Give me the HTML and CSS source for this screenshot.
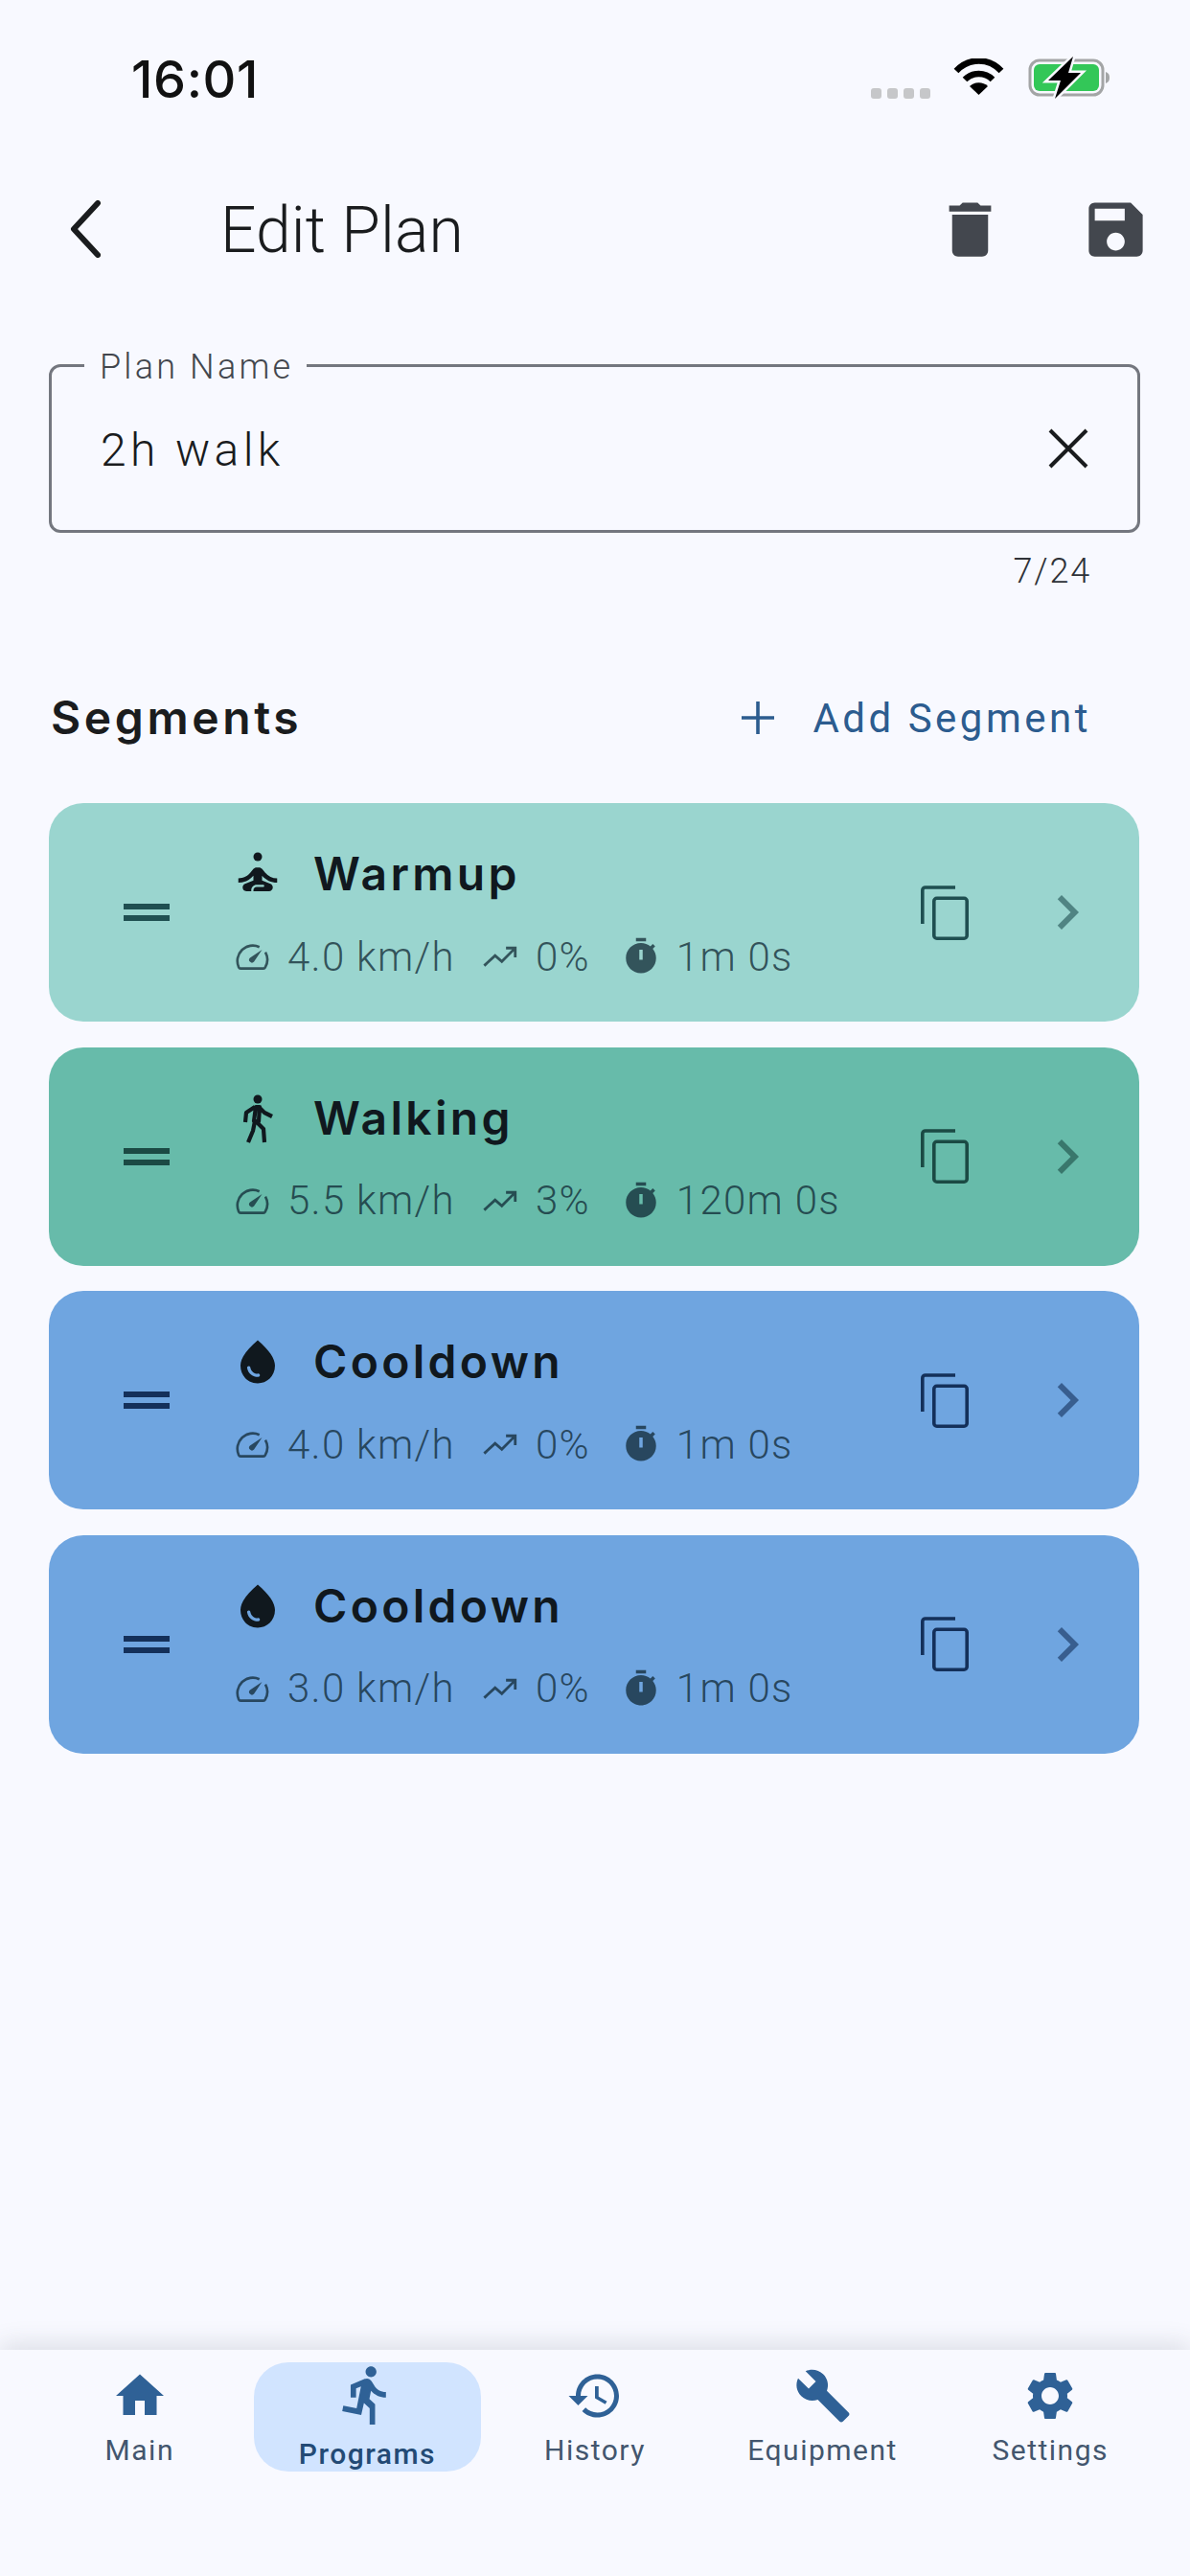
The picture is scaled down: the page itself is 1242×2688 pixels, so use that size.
FILE: index.html
```html
<!DOCTYPE html>
<html lang="en">
<head>
<meta charset="utf-8">
<title>Edit Plan</title>
<link rel="stylesheet" href="styles.css">
</head>
<body>
<svg class="defs" width="0" height="0" aria-hidden="true">
  <symbol id="i-drag" viewBox="0 0 24 24"><path d="M20 9H4v2h16V9zM4 15h16v-2H4v2z"/></symbol>
  <symbol id="i-speed" viewBox="0 0 24 24"><path d="M16.400 6.400A9.200 9.200 0 0 0 4.100 18.500a1.300 1.300 0 0 0 1.100.7H18.800a1.300 1.300 0 0 0 1.100-.7 9.200 9.200 0 0 0 .1-9" fill="none" stroke="currentColor" stroke-width="1.500"/><path d="M10.800 15.200a1.700 1.700 0 0 0 2.400 0l4.800-7.200-7.200 4.800a1.700 1.700 0 0 0 0 2.400z"/></symbol>
  <symbol id="i-trend" viewBox="0 0 24 24"><path d="M2.500 17.500l6.500-6 4 3.500 7.500-7.500M15.500 7h5.500v5.500" fill="none" stroke="currentColor" stroke-width="1.600"/></symbol>
  <symbol id="i-timer" viewBox="0 0 24 24"><path d="M9 1h6v2H9zm10.030 6.390l1.420-1.420c-.43-.51-.9-.99-1.410-1.410l-1.420 1.420C16.070 4.740 14.120 4 12 4c-4.970 0-9 4.030-9 9s4.020 9 9 9 9-4.030 9-9c0-2.120-.74-4.070-1.970-5.610zM13 14h-2V8h2v6z"/></symbol>
  <symbol id="i-chevron" viewBox="0 0 24 24"><path d="M10 6L8.590 7.410 13.170 12l-4.580 4.590L10 18l6-6z"/></symbol>
  <symbol id="i-copy" viewBox="0 0 50 57"><path d="M1.800 40V5a3 3 0 0 1 3-3H36" fill="none" stroke="currentColor" stroke-width="3.600"/><rect x="13.800" y="13.300" width="34.400" height="41.900" rx="3" fill="none" stroke="currentColor" stroke-width="3.600"/></symbol>
  <symbol id="i-warm" viewBox="0 0 24 24"><circle cx="12" cy="4" r="2"/><path d="M21 16v-2c-2.240 0-4.160-.96-5.600-2.680l-1.340-1.600c-.38-.46-.94-.72-1.530-.72h-1.050c-.59 0-1.150.26-1.530.72l-1.340 1.600C7.160 13.040 5.240 14 3 14v2c2.770 0 5.190-1.170 7-3.250V15l-3.880 1.550c-.67.27-1.120.93-1.120 1.660C5 19.200 5.800 20 6.790 20H9v-.5c0-1.380 1.120-2.500 2.500-2.500h3c.28 0 .5.22.5.5s-.22.5-.5.5h-3c-.83 0-1.500.67-1.500 1.500v.5h7.210c.99 0 1.790-.8 1.790-1.790 0-.73-.45-1.390-1.120-1.660L14 15v-2.250c1.810 2.080 4.230 3.250 7 3.250z"/></symbol>
  <symbol id="i-walk" viewBox="0 0 54 54"><circle cx="27" cy="7" r="4.500"/><path d="M24 15L15 21l-1 10M28 15l6 6 8 4M25 15h4l-1 15h-5zM24 30L22 40l-5 12M25 30l8 8 1 14" fill="none" stroke="currentColor" stroke-width="4.200" stroke-linejoin="round"/></symbol>
  <symbol id="i-drop" viewBox="0 0 24 24"><path d="M12 2c-5.330 4.550-8 8.480-8 11.800 0 4.980 3.800 8.200 8 8.200s8-3.220 8-8.200c0-3.320-2.670-7.250-8-11.800zM7.830 14c.37 0 .67.26.74.62.41 2.220 2.280 2.980 3.640 2.870.43-.02.79.32.79.75 0 .4-.32.73-.72.75-2.130.13-4.620-1.090-5.190-4.120-.08-.45.28-.87.74-.87z"/></symbol>
</svg>

<header class="status">
  <span class="time">16:01</span>
  <div class="status-icons">
    <span class="signal"><i></i><i></i><i></i><i></i></span>
    <svg class="wifi" viewBox="0 0 53 38"><path d="M3 13C16-1 37-1 50 13" fill="none" stroke="#000" stroke-width="6.500"/><path d="M12 22c8-8 21-8 29 0" fill="none" stroke="#000" stroke-width="6.500"/><path d="M26.500 38L17 29c5-5 14-5 19 0z"/></svg>
    <svg class="battery" viewBox="0 0 86 44"><rect x="2" y="4" width="76" height="36" rx="10" fill="none" stroke="#a3a5a6" stroke-width="3"/><rect x="6" y="8" width="68" height="28" rx="6" fill="#33c758"/><path d="M81 16c3 1 4 3 4 6s-1 5-4 6z" fill="#a3a5a6"/><path d="M47 0L21 25h13l-6 19 27-27H42z" fill="#000" stroke="#f8f9ff" stroke-width="5" paint-order="stroke"/></svg>
  </div>
</header>

<div class="appbar">
  <svg class="back" viewBox="0 0 32 60"><path d="M29 3L4 30l25 27" fill="none" stroke="#1a1c1e" stroke-width="6" stroke-linecap="round" stroke-linejoin="round"/></svg>
  <h1 class="title">Edit Plan</h1>
  <div class="actions">
    <svg class="action" viewBox="0 0 24 24"><path d="M6 19c0 1.100.9 2 2 2h8c1.100 0 2-.9 2-2V7H6v12zM19 4h-3.500l-1-1h-5l-1 1H5v2h14V4z"/></svg>
    <svg class="action" viewBox="0 0 24 24"><path d="M17 3H5c-1.110 0-2 .9-2 2v14c0 1.100.89 2 2 2h14c1.100 0 2-.9 2-2V7l-4-4zm-5 16c-1.660 0-3-1.340-3-3s1.340-3 3-3 3 1.340 3 3-1.340 3-3 3zm3-10H5V5h10v4z"/></svg>
  </div>
</div>

<div class="field">
  <span class="field-label">Plan Name</span>
  <span class="field-value">2h walk</span>
  <svg class="field-clear" viewBox="0 0 72 72"><path d="M17 17l38 38M55 17L17 55" fill="none" stroke="#1a1c1e" stroke-width="4"/></svg>
</div>
<div class="counter">7/24</div>

<div class="section-row">
  <h2 class="section-title">Segments</h2>
  <div class="add">
    <svg class="add-icon" viewBox="0 0 54 54"><path d="M10 27h34M27 10v34" fill="none" stroke="#2c5c8f" stroke-width="3.600"/></svg>
    <span>Add Segment</span>
  </div>
</div>

<main class="cards">
  <article class="card warm">
    <svg class="drag"><use href="#i-drag"/></svg>
    <div class="info">
      <div class="name"><svg class="type"><use href="#i-warm"/></svg><span>Warmup</span></div>
      <div class="meta">
        <svg class="m-icon"><use href="#i-speed"/></svg><span class="m-text">4.0 km/h</span>
        <svg class="m-icon trend"><use href="#i-trend"/></svg><span class="m-text">0%</span>
        <svg class="m-icon timer"><use href="#i-timer"/></svg><span class="m-text">1m 0s</span>
      </div>
    </div>
    <svg class="copy"><use href="#i-copy"/></svg>
    <svg class="chev"><use href="#i-chevron"/></svg>
  </article>
  <article class="card walk">
    <svg class="drag"><use href="#i-drag"/></svg>
    <div class="info">
      <div class="name"><svg class="type"><use href="#i-walk"/></svg><span>Walking</span></div>
      <div class="meta">
        <svg class="m-icon"><use href="#i-speed"/></svg><span class="m-text">5.5 km/h</span>
        <svg class="m-icon trend"><use href="#i-trend"/></svg><span class="m-text">3%</span>
        <svg class="m-icon timer"><use href="#i-timer"/></svg><span class="m-text">120m 0s</span>
      </div>
    </div>
    <svg class="copy"><use href="#i-copy"/></svg>
    <svg class="chev"><use href="#i-chevron"/></svg>
  </article>
  <article class="card cool">
    <svg class="drag"><use href="#i-drag"/></svg>
    <div class="info">
      <div class="name"><svg class="type"><use href="#i-drop"/></svg><span>Cooldown</span></div>
      <div class="meta">
        <svg class="m-icon"><use href="#i-speed"/></svg><span class="m-text">4.0 km/h</span>
        <svg class="m-icon trend"><use href="#i-trend"/></svg><span class="m-text">0%</span>
        <svg class="m-icon timer"><use href="#i-timer"/></svg><span class="m-text">1m 0s</span>
      </div>
    </div>
    <svg class="copy"><use href="#i-copy"/></svg>
    <svg class="chev"><use href="#i-chevron"/></svg>
  </article>
  <article class="card cool">
    <svg class="drag"><use href="#i-drag"/></svg>
    <div class="info">
      <div class="name"><svg class="type"><use href="#i-drop"/></svg><span>Cooldown</span></div>
      <div class="meta">
        <svg class="m-icon"><use href="#i-speed"/></svg><span class="m-text">3.0 km/h</span>
        <svg class="m-icon trend"><use href="#i-trend"/></svg><span class="m-text">0%</span>
        <svg class="m-icon timer"><use href="#i-timer"/></svg><span class="m-text">1m 0s</span>
      </div>
    </div>
    <svg class="copy"><use href="#i-copy"/></svg>
    <svg class="chev"><use href="#i-chevron"/></svg>
  </article>
</main>

<nav class="nav">
  <div class="nav-item">
    <svg class="nav-icon" viewBox="0 0 24 24"><path d="M10 20v-6h4v6h5v-8h3L12 3 2 12h3v8z"/></svg>
    <span>Main</span>
  </div>
  <div class="nav-item active">
    <svg class="nav-icon" viewBox="0 0 24 24"><path d="M13.490 5.480c1.100 0 2-.9 2-2s-.9-2-2-2-2 .9-2 2 .9 2 2 2zm-3.600 13.900l1-4.400 2.100 2v6h2v-7.500l-2.100-2 .6-3c1.300 1.500 3.300 2.500 5.500 2.500v-2c-1.900 0-3.500-1-4.300-2.400l-1-1.600c-.4-.6-1-1-1.700-1-.3 0-.5.1-.8.1l-5.200 2.200v4.700h2v-3.400l1.800-.7-1.600 8.100-4.900-1-.4 2 7 1.400z"/></svg>
    <span>Programs</span>
  </div>
  <div class="nav-item">
    <svg class="nav-icon" viewBox="0 0 24 24"><path d="M13 3c-4.970 0-9 4.030-9 9H1l3.890 3.890.07.14L9 12H6c0-3.870 3.130-7 7-7s7 3.130 7 7-3.130 7-7 7c-1.930 0-3.680-.79-4.940-2.060l-1.420 1.420C8.270 19.990 10.510 21 13 21c4.970 0 9-4.030 9-9s-4.030-9-9-9zm-1 5v5l4.280 2.540.72-1.210-3.500-2.080V8H12z"/></svg>
    <span>History</span>
  </div>
  <div class="nav-item">
    <svg class="nav-icon" viewBox="0 0 24 24"><path d="M22.700 19l-9.100-9.100c.9-2.300.4-5-1.500-6.900-2-2-5-2.400-7.400-1.300L9 6 6 9 1.600 4.700C.4 7.100.9 10.100 2.900 12.100c1.900 1.900 4.600 2.400 6.900 1.500l9.100 9.100c.4.4 1 .4 1.400 0l2.300-2.300c.5-.4.5-1.100.1-1.400z"/></svg>
    <span>Equipment</span>
  </div>
  <div class="nav-item">
    <svg class="nav-icon" viewBox="0 0 24 24"><path d="M19.140 12.940c.04-.3.06-.61.06-.94 0-.32-.02-.64-.07-.94l2.030-1.580c.18-.14.23-.41.12-.61l-1.920-3.320c-.12-.22-.37-.29-.59-.22l-2.390.96c-.5-.38-1.030-.7-1.620-.94l-.36-2.540c-.04-.24-.24-.41-.48-.41h-3.840c-.24 0-.43.17-.47.41l-.36 2.540c-.59.24-1.130.57-1.620.94l-2.390-.96c-.22-.08-.47 0-.59.22L2.740 8.870c-.12.21-.08.47.12.61l2.030 1.580c-.05.3-.09.63-.09.94s.02.64.07.94l-2.030 1.580c-.18.14-.23.41-.12.61l1.920 3.320c.12.22.37.29.59.22l2.390-.96c.5.38 1.030.7 1.620.94l.36 2.540c.05.24.24.41.48.41h3.840c.24 0 .44-.17.47-.41l.36-2.540c.59-.24 1.130-.56 1.620-.94l2.390.96c.22.08.47 0 .59-.22l1.920-3.320c.12-.22.07-.47-.12-.61l-2.010-1.580zM12 15.600c-1.980 0-3.600-1.620-3.600-3.600s1.620-3.600 3.600-3.600 3.600 1.620 3.600 3.600-1.620 3.600-3.600 3.600z"/></svg>
    <span>Settings</span>
  </div>
</nav>
</body>
</html>
```

FILE: styles.css
```css
* { box-sizing: border-box; }
html, body { margin: 0; padding: 0; }
body {
  width: 1242px;
  height: 2688px;
  overflow: hidden;
  display: flex;
  flex-direction: column;
  background: #f8f9ff;
  color: #1a1c1e;
  font-family: Roboto, "Liberation Sans", sans-serif;
}
.defs { position: absolute; }

.status {
  height: 179px;
  padding: 51px 83px 0 137px;
  display: flex;
  justify-content: space-between;
  align-items: flex-start;
  flex: none;
}
.time { font-family: Inter, Roboto, sans-serif; font-size: 54px; font-weight: 500; line-height: 64px; letter-spacing: 0.6px; color: #111; }
.status-icons { display: flex; align-items: flex-start; padding-top: 10px; }
.signal { display: flex; gap: 6px; margin-top: 31px; margin-right: 24px; }
.signal i { width: 11px; height: 11px; border-radius: 3px; background: #c6c7c9; }
.wifi { width: 53px; height: 38px; margin-right: 25px; }
.battery { width: 86px; height: 44px; margin-top: -2px; }

.appbar { height: 120px; flex: none; display: flex; align-items: center; padding-left: 73px; }
.back { width: 32px; height: 60px; }
.title { margin: 4px 0 0 125px; font-size: 66px; font-weight: 300; line-height: 88px; letter-spacing: 0.1px; }
.actions { margin-left: auto; display: flex; gap: 77px; padding-right: 40px; }
.action { width: 75px; height: 75px; fill: #43474e; }

.field {
  position: relative;
  flex: none;
  height: 176px;
  margin: 81px 52px 0 51px;
  padding: 0 36px 0 51px;
  border: 3px solid #74777f;
  border-radius: 12px;
  display: flex;
  align-items: center;
  justify-content: space-between;
}
.field-label {
  position: absolute;
  left: 34px;
  top: -20px;
  padding: 0 14px 0 16px;
  background: #f8f9ff;
  color: #43474e;
  font-size: 36px;
  font-weight: 300;
  line-height: 40px;
  letter-spacing: 3.2px;
}
.field-value { margin-top: 3px; font-size: 48px; font-weight: 300; letter-spacing: 4.4px; line-height: 64px; color: #1a1c1e; }
.field-clear { width: 72px; height: 72px; }
.counter { flex: none; margin: 19px 103px 0 0; text-align: right; font-size: 36px; font-weight: 300; line-height: 42px; letter-spacing: 1.8px; color: #2f3238; }

.section-row { flex: none; height: 72px; margin-top: 96px; padding: 0 103px 0 53px; display: flex; align-items: center; justify-content: space-between; }
.section-title { margin: 0; font-family: Inter, Roboto, sans-serif; font-size: 48px; font-weight: 600; line-height: 72px; letter-spacing: 3.6px; color: #1a1c1e; }
.add { display: flex; align-items: center; gap: 30px; color: #2c5c8f; font-size: 42px; font-weight: 400; letter-spacing: 3.5px; }
.add-icon { width: 54px; height: 54px; }

.cards { flex: none; margin: 53px 53px 0 51px; display: flex; flex-direction: column; gap: 26.500px; }
.card {
  height: 228px;
  border-radius: 36px;
  padding: 0 39px 0 66px;
  display: flex;
  align-items: center;
}
.warm { background: #9ad5cf; --ink: #1f4f51; }
.walk { background: #67bbaa; --ink: #1b4a44; }
.cool { background: #6fa5e0; --ink: #14305a; }
.drag { width: 72px; height: 72px; fill: var(--ink); flex: none; }
.info { flex: 1; margin-left: 53px; display: flex; flex-direction: column; gap: 32px; padding-top: 0; }
.name { display: flex; align-items: center; gap: 31px; font-family: Inter, Roboto, sans-serif; font-size: 48px; font-weight: 600; line-height: 60px; letter-spacing: 3.3px; color: #10181e; }
.type { width: 54px; height: 54px; fill: #10181e; color: #10181e; flex: none; }
.meta { display: flex; align-items: center; height: 48px; color: rgba(16, 40, 52, 0.76); font-size: 42px; font-weight: 300; letter-spacing: 1.3px; }
.m-icon { width: 42px; height: 42px; flex: none; fill: rgba(16, 40, 52, 0.75); color: rgba(16, 40, 52, 0.75); margin-right: 16px; }
.m-icon.trend { margin-left: 26px; }
.m-icon.timer { margin-left: 32px; }
.copy { width: 50px; height: 57px; margin-right: 67px; flex: none; color: var(--ink); }
.chev { width: 72px; height: 72px; flex: none; fill: var(--ink); opacity: 0.6; }

.nav {
  margin-top: auto;
  flex: none;
  height: 236px;
  padding: 13px 27px 0;
  display: grid;
  grid-template-columns: repeat(5, 1fr);
  align-items: start;
  background: #f8f9ff;
  box-shadow: 0 -6px 24px rgba(60, 64, 80, 0.14);
}
.nav-item {
  height: 114px;
  padding-top: 5px;
  display: flex;
  flex-direction: column;
  align-items: center;
  color: #43566e;
  font-size: 30px;
  line-height: 36px;
  letter-spacing: 1.5px;
  border-radius: 36px;
}
.nav-item span { margin-top: 9px; }
.nav-icon { width: 60px; height: 60px; fill: #2f6196; flex: none; }
.active { background: #d1e4ff; color: #234a75; font-weight: 500; padding-top: 0; }
.active .nav-icon { width: 68px; height: 68px; }
.active span { margin-top: 10px; }
```
